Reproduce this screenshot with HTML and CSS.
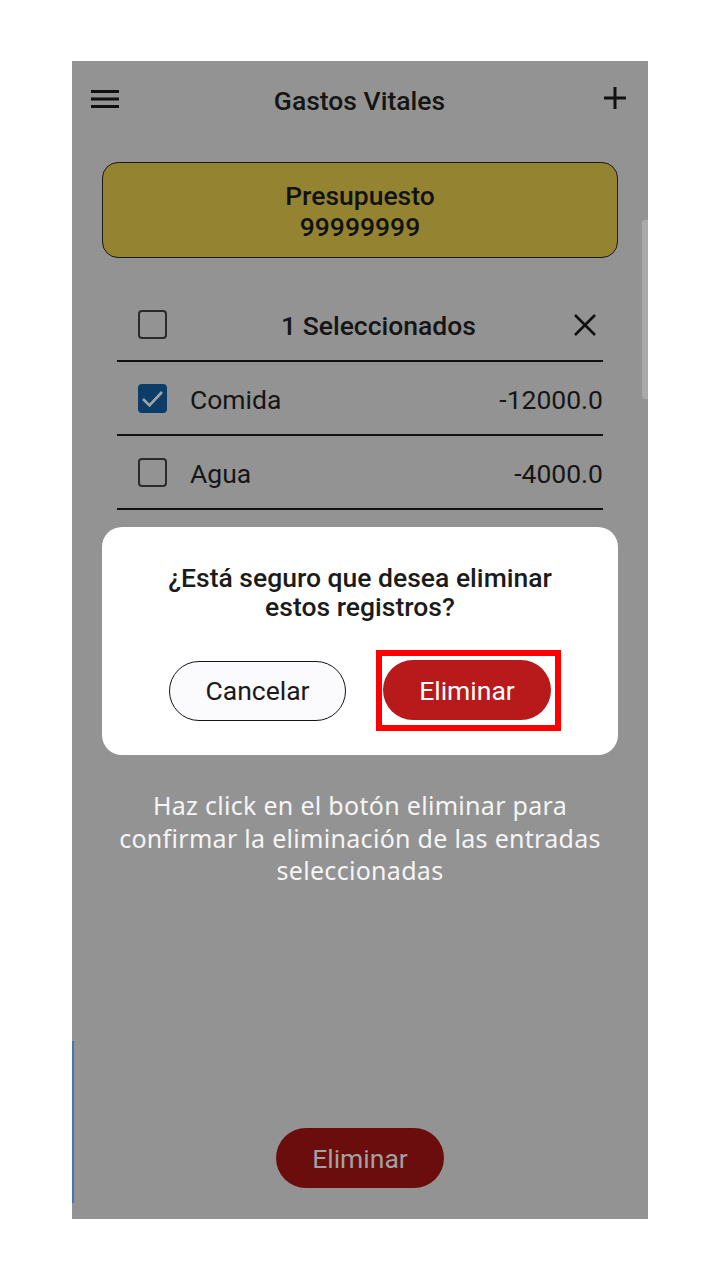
FILE: index.html
```html
<!DOCTYPE html>
<html lang="es">
<head>
<meta charset="utf-8">
<title>Gastos Vitales</title>
<link rel="stylesheet" href="styles.css">
</head>
<body>
<div class="screen">
  <div class="app">
    <header class="topbar">
      <svg class="icon-menu" width="28" height="18" viewBox="0 0 28 18"><path d="M0 1.5H28M0 9H28M0 16.5H28" stroke="#111" stroke-width="3"/></svg>
      <h1 class="title">Gastos Vitales</h1>
      <svg class="icon-plus" width="22" height="22" viewBox="0 0 22 22"><path d="M11 0V22M0 11H22" stroke="#111" stroke-width="3"/></svg>
    </header>

    <section class="budget">
      <div>Presupuesto</div>
      <div>99999999</div>
    </section>

    <div class="list">
      <div class="row row-head">
        <span class="check"></span>
        <span class="sel-title">1 Seleccionados</span>
        <svg class="icon-close" width="22" height="22" viewBox="0 0 22 22"><path d="M1 1L21 21M21 1L1 21" stroke="#111" stroke-width="2.6"/></svg>
      </div>
      <div class="row">
        <span class="check checked"><svg width="29" height="29" viewBox="0 0 29 29"><polyline points="5,15 11.5,21.5 24,8" fill="none" stroke="#a3a3a3" stroke-width="2.6"/></svg></span>
        <span class="label">Comida</span>
        <span class="amount">-12000.0</span>
      </div>
      <div class="row">
        <span class="check"></span>
        <span class="label">Agua</span>
        <span class="amount">-4000.0</span>
      </div>
    </div>

    <button class="delete-bottom">Eliminar</button>
  </div>

  <div class="overlay">
    <div class="dialog">
      <p class="dialog-title">¿Está seguro que desea eliminar<br>estos registros?</p>
      <div class="dialog-actions">
        <button class="btn-cancel">Cancelar</button>
        <span class="highlight"><button class="btn-delete">Eliminar</button></span>
      </div>
    </div>
    <p class="hint">Haz click en el botón eliminar para<br>confirmar la eliminación de las entradas<br>seleccionadas</p>
  </div>

  <div class="scrollbar"></div>
  <div class="edge-line"></div>
</div>
</body>
</html>
```

FILE: styles.css
```css
* { box-sizing: border-box; }

html, body {
  margin: 0;
  padding: 0;
  background: #ffffff;
}

.screen {
  position: relative;
  width: 576px;
  height: 1158px;
  margin: 61px 0 0 72px;
  background: #939393;
  font-family: Roboto, "Liberation Sans", sans-serif;
  color: #151515;
  overflow: hidden;
}

.app {
  height: 100%;
  display: flex;
  flex-direction: column;
}

.topbar {
  height: 78px;
  display: grid;
  grid-template-columns: 1fr auto 1fr;
  align-items: center;
  padding: 0 22px 0 19px;
}

.icon-plus { justify-self: end; margin-top: -4px; }
.icon-menu { margin-top: -3px; }

.title {
  margin: 0;
  font-size: 26.5px;
  font-weight: 500;
  color: #151515;
  padding-left: 2px;
}

.budget {
  margin: 23px 30px 0;
  height: 96px;
  border: 1.5px solid #1a1a1a;
  border-radius: 16px;
  background: #948432;
  display: flex;
  flex-direction: column;
  align-items: center;
  justify-content: center;
  font-size: 26.5px;
  font-weight: 500;
  line-height: 31px;
  color: #121212;
  padding-top: 2px;
}

.list {
  margin: 30px 45px 0;
}

.row {
  height: 74px;
  border-bottom: 2px solid #111;
  display: flex;
  align-items: center;
  padding-left: 21px;
  font-size: 26.5px;
}

.check {
  flex: none;
  width: 29px;
  height: 29px;
  border: 2.5px solid #2a2a2a;
  border-radius: 4px;
  margin-right: 23px;
  display: flex;
  align-items: center;
  justify-content: center;
}

.check.checked {
  background: #0c3d68;
  border: none;
}

.sel-title {
  flex: 1;
  text-align: center;
  font-weight: 500;
  padding-right: 7px;
  margin-top: 2px;
}

.icon-close { margin-right: 7px; margin-top: 2px; }

.label { color: #161616; margin-top: 2px; }

.amount {
  margin-left: auto;
  margin-top: 2px;
  color: #161616;
}

.delete-bottom {
  margin: auto auto 31px;
  width: 168px;
  height: 60px;
  border: none;
  border-radius: 30px;
  background: #6b0d0d;
  color: #a2a2a2;
  font-family: Roboto, "Liberation Sans", sans-serif;
  font-size: 26.5px;
}

.overlay {
  position: absolute;
  inset: 0;
  display: flex;
  flex-direction: column;
  padding-top: 466px;
}

.dialog {
  margin: 0 30px;
  background: #ffffff;
  border-radius: 20px;
  padding: 36px 0 24px;
  text-align: center;
}

.dialog-title {
  margin: 0;
  font-size: 26.5px;
  font-weight: 500;
  line-height: 29px;
  color: #1b1b1b;
}

.dialog-actions {
  margin-top: 29px;
  display: flex;
  justify-content: center;
  align-items: center;
  gap: 30px;
  padding-left: 10px;
}

.btn-cancel,
.btn-delete {
  height: 60px;
  border-radius: 30px;
  font-family: Roboto, "Liberation Sans", sans-serif;
  font-size: 26.5px;
}

.btn-cancel {
  width: 177px;
  border: 1.5px solid #151515;
  background: #fbfbfd;
  color: #1a1a1a;
}

.btn-delete {
  display: block;
  width: 168px;
  border: none;
  background: #b8191b;
  color: #ffffff;
}

.highlight {
  display: block;
  border: 6px solid #ff0000;
  padding: 4px 4px 5px 1px;
}

.hint {
  margin: 34px 0 0;
  text-align: center;
  color: #f5f5f5;
  font-family: "Noto Sans", "Open Sans", sans-serif;
  font-size: 25px;
  line-height: 32.5px;
  letter-spacing: 0.3px;
}

.scrollbar {
  position: absolute;
  right: 0;
  top: 159px;
  width: 6px;
  height: 179px;
  border-radius: 3px 0 0 3px;
  background: #a9a9a9;
}

.edge-line {
  position: absolute;
  left: 0;
  top: 980px;
  width: 1.5px;
  height: 162px;
  background: #3b78b5;
}
```
